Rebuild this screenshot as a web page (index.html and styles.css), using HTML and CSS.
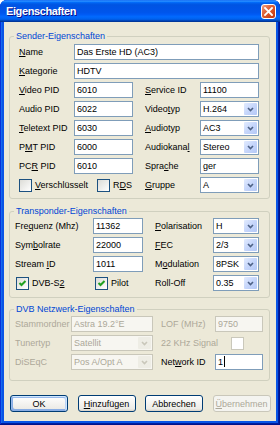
FILE: index.html
```html
<!DOCTYPE html>
<html lang="de">
<head>
    <meta charset="UTF-8">
    <meta name="viewport" content="width=device-width, initial-scale=1.0">
    <title>Eigenschaften</title>
    <link rel="stylesheet" href="styles.css">
</head>
<body>
    <div class="window">
        <div class="titlebar">
            <span class="title">Eigenschaften</span>
            <span class="close">
                <svg width="9" height="9" viewBox="0 0 9 9"><path d="M1 1 L8 8 M8 1 L1 8" stroke="#fff" stroke-width="1.8" stroke-linecap="square"/></svg>
            </span>
        </div>

        <div class="client">
            <fieldset class="group sender">
                <legend>Sender-Eigenschaften</legend>
                <div class="grid">
                    <span class="lbl"><u>N</u>ame</span>
                    <div class="edit wide">Das Erste HD (AC3)</div>

                    <span class="lbl"><u>K</u>ategorie</span>
                    <div class="edit wide">HDTV</div>

                    <span class="lbl"><u>V</u>ideo PID</span>
                    <div class="edit">6010</div>
                    <span class="lbl right"><u>S</u>ervice ID</span>
                    <div class="edit">11100</div>

                    <span class="lbl">Audio PID</span>
                    <div class="edit">6022</div>
                    <span class="lbl right">Video<u>t</u>yp</span>
                    <div class="combo"><span class="val">H.264</span><span class="arr"><svg width="7" height="5" viewBox="0 0 7 5"><path d="M1 1 L3.5 3.5 L6 1" fill="none" stroke="#4d6185" stroke-width="1.6"/></svg></span></div>

                    <span class="lbl"><u>T</u>eletext PID</span>
                    <div class="edit">6030</div>
                    <span class="lbl right"><u>A</u>udiotyp</span>
                    <div class="combo"><span class="val">AC3</span><span class="arr"><svg width="7" height="5" viewBox="0 0 7 5"><path d="M1 1 L3.5 3.5 L6 1" fill="none" stroke="#4d6185" stroke-width="1.6"/></svg></span></div>

                    <span class="lbl">P<u>M</u>T PID</span>
                    <div class="edit">6000</div>
                    <span class="lbl right">Audiokana<u>l</u></span>
                    <div class="combo"><span class="val">Stereo</span><span class="arr"><svg width="7" height="5" viewBox="0 0 7 5"><path d="M1 1 L3.5 3.5 L6 1" fill="none" stroke="#4d6185" stroke-width="1.6"/></svg></span></div>

                    <span class="lbl">PC<u>R</u> PID</span>
                    <div class="edit">6010</div>
                    <span class="lbl right">Spra<u>c</u>he</span>
                    <div class="edit">ger</div>

                    <div class="checks sender-checks">
                        <span class="cb"><span class="box"></span><span><u>V</u>erschlüsselt</span></span>
                        <span class="cb"><span class="box"></span><span>R<u>D</u>S</span></span>
                    </div>
                    <span class="lbl right"><u>G</u>ruppe</span>
                    <div class="combo"><span class="val">A</span><span class="arr"><svg width="7" height="5" viewBox="0 0 7 5"><path d="M1 1 L3.5 3.5 L6 1" fill="none" stroke="#4d6185" stroke-width="1.6"/></svg></span></div>
                </div>
            </fieldset>

            <fieldset class="group transponder">
                <legend>Transponder-Eigenschaften</legend>
                <div class="grid">
                    <span class="lbl">Fre<u>q</u>uenz (Mhz)</span>
                    <div class="edit">11362</div>
                    <span class="lbl right"><u>P</u>olarisation</span>
                    <div class="combo"><span class="val">H</span><span class="arr"><svg width="7" height="5" viewBox="0 0 7 5"><path d="M1 1 L3.5 3.5 L6 1" fill="none" stroke="#4d6185" stroke-width="1.6"/></svg></span></div>

                    <span class="lbl">Sym<u>b</u>olrate</span>
                    <div class="edit">22000</div>
                    <span class="lbl right"><u>F</u>EC</span>
                    <div class="combo"><span class="val">2/3</span><span class="arr"><svg width="7" height="5" viewBox="0 0 7 5"><path d="M1 1 L3.5 3.5 L6 1" fill="none" stroke="#4d6185" stroke-width="1.6"/></svg></span></div>

                    <span class="lbl">Stream <u>I</u>D</span>
                    <div class="edit">1011</div>
                    <span class="lbl right">M<u>o</u>dulation</span>
                    <div class="combo"><span class="val">8PSK</span><span class="arr"><svg width="7" height="5" viewBox="0 0 7 5"><path d="M1 1 L3.5 3.5 L6 1" fill="none" stroke="#4d6185" stroke-width="1.6"/></svg></span></div>

                    <div class="checks transponder-checks">
                        <span class="cb"><span class="box"><svg width="11" height="11" viewBox="0 0 11 11"><path d="M2.5 5 L4.5 7 L8.5 3" fill="none" stroke="#21a121" stroke-width="2"/></svg></span><span>DVB-S<u>2</u></span></span>
                        <span class="cb"><span class="box"><svg width="11" height="11" viewBox="0 0 11 11"><path d="M2.5 5 L4.5 7 L8.5 3" fill="none" stroke="#21a121" stroke-width="2"/></svg></span><span>Pilot</span></span>
                    </div>
                    <span class="lbl right">Roll-Off</span>
                    <div class="combo"><span class="val">0.35</span><span class="arr"><svg width="7" height="5" viewBox="0 0 7 5"><path d="M1 1 L3.5 3.5 L6 1" fill="none" stroke="#4d6185" stroke-width="1.6"/></svg></span></div>
                </div>
            </fieldset>

            <fieldset class="group network">
                <legend>DVB Netzwerk-Eigenschaften</legend>
                <div class="grid">
                    <span class="lbl off">Stammordner</span>
                    <div class="edit off">Astra 19.2°E</div>
                    <span class="lbl right off">LOF (MHz)</span>
                    <div class="edit off">9750</div>

                    <span class="lbl off">Tunertyp</span>
                    <div class="combo off"><span class="val">Satellit</span><span class="arr"><svg width="7" height="5" viewBox="0 0 7 5"><path d="M1 1 L3.5 3.5 L6 1" fill="none" stroke="#c9c7ba" stroke-width="1.6"/></svg></span></div>
                    <span class="lbl right off">22 KHz Signal</span>
                    <span class="box off-box"></span>

                    <span class="lbl off">DiSEqC</span>
                    <div class="combo off"><span class="val">Pos A/Opt A</span><span class="arr"><svg width="7" height="5" viewBox="0 0 7 5"><path d="M1 1 L3.5 3.5 L6 1" fill="none" stroke="#c9c7ba" stroke-width="1.6"/></svg></span></div>
                    <span class="lbl right">Net<u>w</u>ork ID</span>
                    <div class="edit">1<span class="caret"></span></div>
                </div>
            </fieldset>

            <div class="buttons">
                <button class="btn default">OK</button>
                <button class="btn"><u>H</u>inzufügen</button>
                <button class="btn">Abbrechen</button>
                <button class="btn" disabled><u>Ü</u>bernehmen</button>
            </div>
        </div>
    </div>
</body>
</html>
```

FILE: styles.css
```css
* {
    margin: 0;
    padding: 0;
    box-sizing: border-box;
}

body {
    font-family: 'Liberation Sans', Arial, sans-serif;
    font-size: 9px;
    color: #000;
    background: #fff;
}

u {
    text-decoration: underline;
    text-underline-offset: 1px;
}

.window {
    width: 280px;
    height: 425px;
    display: flex;
    flex-direction: column;
    background: #0a55e6;
    border-radius: 7px 7px 0 0;
    box-shadow: inset -1px -1px #00138c, inset 1px 0 #0831d9, inset -2px -2px #001ea0, inset 2px 0 #166aee;
}

.titlebar {
    height: 22px;
    flex: none;
    display: flex;
    align-items: center;
    justify-content: space-between;
    padding: 0 4px 0 6px;
    border-radius: 7px 7px 0 0;
    background: linear-gradient(180deg, #0058ee 0%, #3593ff 4%, #288eff 6%, #127dff 8%, #036ffc 10%, #0262ee 14%, #0057e5 20%, #0054e3 24%, #0055eb 56%, #005bf5 66%, #026afe 76%, #0062ef 86%, #0052d6 92%, #0040ab 94%, #003092 100%);
}

.title {
    color: #fff;
    font-weight: bold;
    font-size: 11px;
    letter-spacing: -0.4px;
    text-shadow: 1px 1px #0f1089;
}

.close {
    width: 15px;
    height: 15px;
    display: flex;
    align-items: center;
    justify-content: center;
    border: 1px solid #fff;
    border-radius: 3px;
    background: linear-gradient(135deg, #f0a285 0%, #e2683f 35%, #d24a1e 70%, #b7361a 100%);
}

.client {
    flex: 1;
    margin: 0 4px 4px;
    background: #ece9d8;
    display: flex;
    flex-direction: column;
}

.group {
    border: 1px solid #d0d0bf;
    border-radius: 3px;
    margin: 0 6px 0 5px;
}

.group legend {
    color: #0046d5;
    line-height: 12px;
    margin-left: 4px;
    padding: 0 2px;
}

.grid {
    display: grid;
    grid-auto-rows: 16px;
    row-gap: 3px;
    align-items: center;
}

.sender {
    margin-top: 8px;
}

.sender .grid {
    grid-template-columns: 55px 59px 12px 55px 59px;
    padding: 2px 0 5px 9px;
}

.transponder {
    margin-top: 6px;
}

.transponder .grid {
    grid-template-columns: 78px 50px 12px 58px 46px;
    padding: 1px 0 6px 5px;
}

.network {
    margin-top: 5px;
}

.network .grid {
    grid-template-columns: 56px 82px 8px 54px 48px;
    padding: 1px 0 10px 5px;
}

.lbl {
    white-space: nowrap;
}

.lbl.right {
    grid-column: 4;
}

.lbl.off {
    color: #aca899;
}

.wide {
    grid-column: 2 / 6;
}

.edit {
    height: 16px;
    border: 1px solid #7f9db9;
    background: #fff;
    padding: 0 2px;
    line-height: 14px;
    white-space: nowrap;
    overflow: hidden;
}

.edit.off {
    border-color: #c9c7ba;
    background: #f7f6f1;
    color: #aca899;
}

.caret {
    display: inline-block;
    width: 1px;
    height: 11px;
    margin-left: 1px;
    background: #000;
    vertical-align: -2px;
}

.combo {
    height: 16px;
    display: flex;
    border: 1px solid #7f9db9;
    background: #fff;
}

.combo .val {
    flex: 1;
    padding-left: 2px;
    line-height: 14px;
    white-space: nowrap;
    overflow: hidden;
}

.combo .arr {
    width: 13px;
    margin: 1px;
    display: flex;
    align-items: center;
    justify-content: center;
    border-radius: 1px;
    background: linear-gradient(135deg, #e2ebfe 0%, #c6d6fb 50%, #b4c8f6 100%);
}

.combo.off {
    border-color: #c9c7ba;
    background: #f7f6f1;
    color: #aca899;
}

.combo.off .arr {
    background: #eeede5;
}

.checks {
    grid-column: 1 / 3;
    display: grid;
    align-items: center;
}

.sender-checks {
    grid-template-columns: 78px auto;
}

.transponder-checks {
    grid-template-columns: 79px auto;
    padding-left: 1px;
}

.cb {
    display: flex;
    align-items: center;
    gap: 3px;
    white-space: nowrap;
}

.box {
    width: 13px;
    height: 13px;
    display: flex;
    align-items: center;
    justify-content: center;
    border: 1px solid #1c5180;
    background: linear-gradient(135deg, #dcdcd7, #fff);
}

.off-box {
    grid-column: 5;
    margin-left: 16px;
    border-color: #cac8bb;
    background: #fff;
}

.buttons {
    display: flex;
    gap: 9.5px;
    margin: 14px 0 0 6px;
}

.btn {
    width: 58px;
    height: 17px;
    font-family: inherit;
    font-size: 9px;
    color: #000;
    border: 1px solid #003c74;
    border-radius: 3px;
    background: linear-gradient(180deg, #fff 0%, #ecebe6 86%, #d6d0c5 100%);
}

.btn.default {
    box-shadow: inset -1px 1px #cee7ff, inset 1px 2px #98b8ea, inset -2px 2px #bcd4f6, inset 1px -1px #89ade4, inset 2px -2px #89ade4;
}

.btn:disabled {
    color: #aca899;
    border-color: #c9c7ba;
    background: #f4f4f0;
}
```
